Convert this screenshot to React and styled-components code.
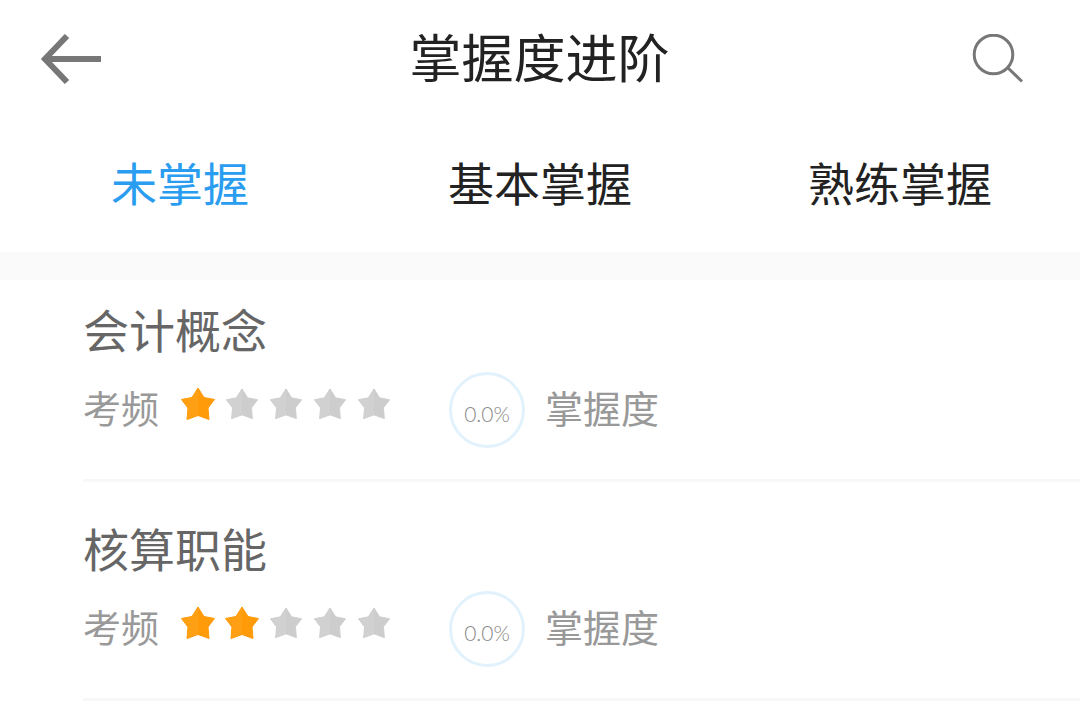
import React from 'react';
import styled, { createGlobalStyle } from 'styled-components';

const tabs = ['未掌握', '基本掌握', '熟练掌握'];

const topics = [
    { id: 1, name: '会计概念', frequency: 1, mastery: 0 },
    { id: 2, name: '核算职能', frequency: 2, mastery: 0 },
];

function App() {
    return (
        <>
            <GlobalStyle />
            <Header>
                <IconButton aria-label='返回'>
                    <svg width='62' height='50' viewBox='0 0 62 50' fill='none' stroke='#777' strokeWidth='6'>
                        <path d='M27 2 L5 25 L27 48 M5 25 H61' />
                    </svg>
                </IconButton>
                <Title>掌握度进阶</Title>
                <IconButton aria-label='搜索'>
                    <svg width='52' height='50' viewBox='0 0 52 50' fill='none' stroke='#777' strokeWidth='3'>
                        <circle cx='22.5' cy='20.5' r='19.3' />
                        <path d='M36.5 33.5 L51 47.5' />
                    </svg>
                </IconButton>
            </Header>
            <Tabs>
                {tabs.map((tab, index) => (
                    <Tab key={tab} $active={index === 0}>
                        {tab}
                    </Tab>
                ))}
            </Tabs>
            <List>
                {topics.map((topic) => (
                    <Topic key={topic.id} topic={topic} />
                ))}
            </List>
        </>
    );
}

const Topic = ({ topic }) => (
    <TopicContainer>
        <TopicName>{topic.name}</TopicName>
        <Stats>
            <Label>考频</Label>
            <Stars role='img' aria-label={`${topic.frequency} / 5`}>
                {[1, 2, 3, 4, 5].map((n) => (
                    <Star key={n} filled={n <= topic.frequency} />
                ))}
            </Stars>
            <Ring>{topic.mastery.toFixed(1)}%</Ring>
            <Label>掌握度</Label>
        </Stats>
    </TopicContainer>
);

// empty stars are drawn slightly smaller, each star has a lighter left half
const Star = ({ filled }) => (
    <svg width='34' height='34' viewBox={filled ? '0 0 34 34' : '-1 -1 36 36'}>
        <path
            d='M17 1 L23 10.5 L33.5 12.5 L27 21 L28 32.5 L17 28.5 L6 32.5 L7 21 L0.5 12.5 L11 10.5 Z'
            fill={filled ? '#ff9a08' : '#cdcdcd'}
            stroke={filled ? '#ff9a08' : '#cdcdcd'}
            strokeLinejoin='round'
        />
        <path
            d='M17 1 V28.5 L6 32.5 L7 21 L0.5 12.5 L11 10.5 Z'
            fill={filled ? '#ffa014' : '#d1d1d1'}
        />
    </svg>
);

const GlobalStyle = createGlobalStyle`
    body {
        margin: 0;
        background: #fff;
        font-family: 'Noto Sans', 'Noto Sans CJK SC', sans-serif;
    }

    button {
        border: 0;
        padding: 0;
        background: none;
        font-family: inherit;
    }

    svg {
        display: block;
    }
`;

const Header = styled.header`
    display: grid;
    grid-template-columns: 1fr auto 1fr;
    align-items: center;
    height: 118px;
    padding: 0 57px 0 40px;
`;

const IconButton = styled.button`
    justify-self: start;
    cursor: pointer;

    &:last-child {
        justify-self: end;
    }
`;

const Title = styled.h1`
    margin: 0;
    padding: 0 0 2px 16px;
    font-size: 52px;
    font-weight: 400;
    line-height: 60px;
    color: #222;
`;

const Tabs = styled.nav`
    display: flex;
    height: 134px;
    border-bottom: 28px solid #fafafa;
`;

const Tab = styled.button`
    flex: 1;
    padding-bottom: 4px;
    font-size: 46px;
    line-height: 60px;
    color: ${({ $active }) => ($active ? '#2b9df0' : '#222')};
    cursor: pointer;
`;

const List = styled.ul`
    margin: 0;
    padding: 0 0 0 83px;
    list-style: none;
`;

const TopicContainer = styled.li`
    padding: 37px 0 31px;
    border-bottom: 3px solid #f8f8f8;

    &:first-child {
        padding-top: 20px;
    }
`;

const TopicName = styled.h2`
    margin: 0;
    font-size: 46px;
    font-weight: 400;
    line-height: 60px;
    color: #666;
`;

const Stats = styled.div`
    display: flex;
    align-items: center;
    margin-top: 12px;
`;

const Label = styled.span`
    padding-bottom: 4px;
    font-size: 38px;
    line-height: 60px;
    color: #999;
`;

const Stars = styled.div`
    display: flex;
    gap: 10px;
    margin: 0 58px 0 22px;
    padding-bottom: 12px;
`;

const Ring = styled.div`
    display: flex;
    align-items: center;
    justify-content: center;
    box-sizing: border-box;
    width: 76px;
    height: 76px;
    margin-right: 20px;
    padding-top: 6px;
    border: 3px solid #e2f2fc;
    border-radius: 50%;
    font-family: Lato, sans-serif;
    font-size: 21px;
    font-weight: 300;
    color: #888;
`;

export default App;
